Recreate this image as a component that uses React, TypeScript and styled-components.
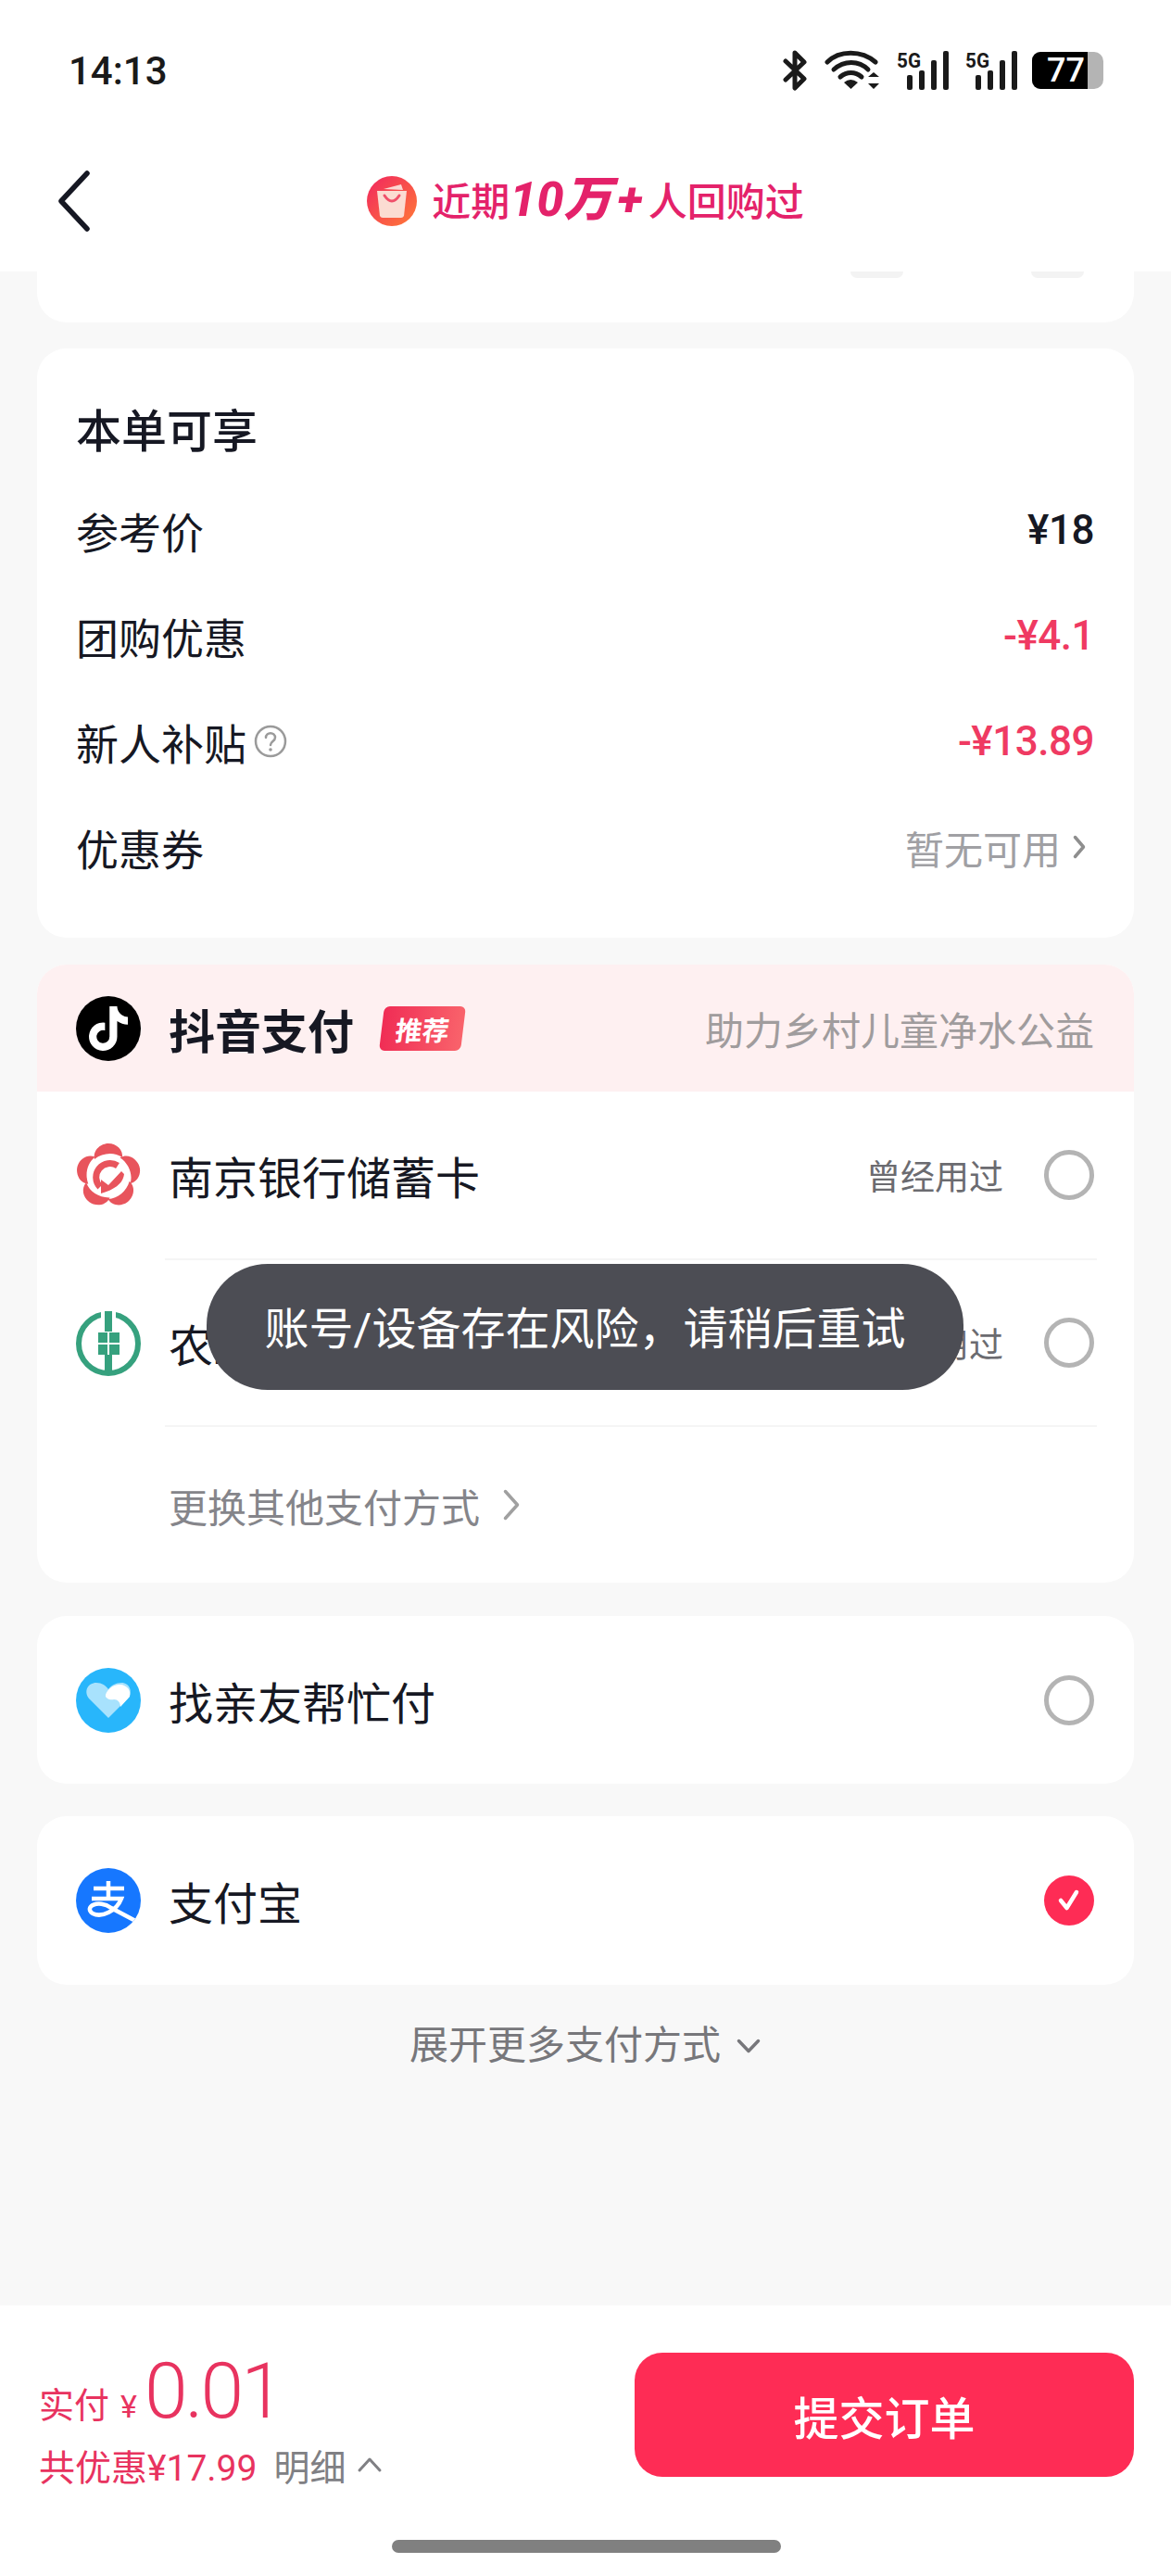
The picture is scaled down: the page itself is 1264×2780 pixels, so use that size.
import React from "react";
import styled, { createGlobalStyle } from "styled-components";
import { FaTiktok } from "react-icons/fa6";

const GlobalStyle = createGlobalStyle`
  html, body { margin: 0; padding: 0; background: #f8f8f8; }
  * { box-sizing: border-box; }
  body { font-family: Roboto, "Noto Sans CJK SC", sans-serif; color: #161823; }
`;

const Screen = styled.div`
  position: relative;
  width: 1264px;
  height: 2780px;
  display: flex;
  flex-direction: column;
  overflow: hidden;
  background: #f8f8f8;
`;

/* ---------- top ---------- */
const Header = styled.header`
  flex-shrink: 0;
  height: 293px;
  background: #fff;
`;

const StatusBar = styled.div`
  height: 152px;
  padding: 0 74px;
  display: flex;
  align-items: center;
  justify-content: space-between;
`;

const Time = styled.span`
  font-size: 42px;
  font-weight: 500;
  letter-spacing: 0;
  color: #1a1a1a;
`;

const StatusIcons = styled.div`
  display: flex;
  align-items: center;
  margin-right: -1px;
  gap: 18px;
`;

const Battery = styled.div`
  width: 77px;
  height: 40px;
  display: flex;
  margin-left: -2px;
  border-radius: 9px 10px 10px 9px;
  overflow: hidden;
  background: #b4b4b4;
`;

const BatteryFill = styled.span`
  width: 60px;
  background: #000;
  color: #fff;
  font-size: 36px;
  font-weight: 500;
  line-height: 40px;
  text-align: right;
  padding-right: 3px;
`;

const Nav = styled.div`
  height: 130px;
  padding: 0 62px;
  display: grid;
  grid-template-columns: 1fr auto 1fr;
  align-items: center;
`;

const BuyerTitle = styled.div`
  display: flex;
  align-items: center;
  gap: 16px;
  color: #e4226a;
  font-size: 42px;
  font-weight: 500;
  line-height: 60px;
`;

const BuyerStrong = styled.span`
  font-size: 52px;
  font-weight: 800;
  font-style: italic;
  margin-right: 6px;
`;

const BuyerText = styled.span`
  display: flex;
  align-items: baseline;
`;

/* ---------- content ---------- */
const Main = styled.main`
  flex: 1;
  padding: 0 40px;
  display: flex;
  flex-direction: column;
`;

const Card = styled.section<{ $gap: number }>`
  margin-bottom: ${(p) => p.$gap}px;
  background: #fff;
  border-radius: 32px;
  overflow: hidden;
`;

const PeekCard = styled.div`
  height: 55px;
  margin-bottom: 28px;
  padding-right: 54px;
  display: flex;
  justify-content: flex-end;
  gap: 138px;
  background: #fff;
  border-radius: 0 0 32px 32px;
`;

const PeekDot = styled.span`
  width: 57px;
  height: 7px;
  border-radius: 0 0 28px 28px;
  background: #f3f3f3;
`;

const DiscountCard = styled(Card)`
  height: 636px;
  padding: 43px 43px 0 42px;
`;

const CardTitle = styled.h2`
  margin: 0;
  height: 96px;
  font-size: 49px;
  font-weight: 500;
  line-height: 96px;
`;

const PriceRow = styled.div`
  height: 114px;
  display: flex;
  align-items: center;
  justify-content: space-between;
  font-size: 46px;
`;

const PriceLabel = styled.span`
  display: flex;
  align-items: center;
  gap: 8px;
`;

const PriceValue = styled.span<{ $red?: boolean }>`
  font-size: 44px;
  font-weight: 500;
  letter-spacing: -0.5px;
  color: ${(p) => (p.$red ? "#ef3a62" : "#161823")};
`;

const CouponHint = styled.span`
  display: flex;
  align-items: center;
  gap: 12px;
  margin-right: 8px;
  font-size: 42px;
  color: #a0a0a4;
`;

const PayCard = styled(Card)`
  display: flex;
  flex-direction: column;
`;

const PayHead = styled.div`
  height: 137px;
  padding: 0 43px 0 42px;
  display: flex;
  align-items: center;
  background: #fef0f1;
`;

const PayHeadName = styled.span`
  margin-left: 30px;
  font-size: 50px;
  font-weight: 700;
`;

const RecommendTag = styled.span`
  margin-left: 30px;
  width: 88px;
  height: 48px;
  display: flex;
  align-items: center;
  justify-content: center;
  transform: skewX(-7deg);
  border-radius: 6px;
  background: linear-gradient(90deg, #f02d55, #f9636b);
  color: #fff;
  font-size: 29px;
  font-weight: 700;
`;

const PayHeadNote = styled.span`
  margin-left: auto;
  font-size: 42px;
  color: #a09c9d;
`;

const PayRow = styled.div<{ $height: number }>`
  height: ${(p) => p.$height}px;
  padding-left: 42px;
  display: flex;
  align-items: center;
`;

const RowBody = styled.div<{ $divider?: boolean }>`
  flex: 1;
  height: 100%;
  margin: 0 40px 0 26px;
  padding: 0 3px 0 4px;
  display: flex;
  align-items: center;
  font-size: 48px;
  border-bottom: ${(p) => (p.$divider ? "2px solid #f5f5f5" : "none")};
`;

const UsedNote = styled.span`
  margin-left: auto;
  margin-right: 44px;
  font-size: 37px;
  color: #6b6b70;
`;

const Radio = styled.span<{ $checked?: boolean }>`
  width: 54px;
  height: 54px;
  flex-shrink: 0;
  display: flex;
  align-items: center;
  justify-content: center;
  border-radius: 50%;
  border: ${(p) => (p.$checked ? "none" : "5px solid #b4b4b4")};
  background: ${(p) => (p.$checked ? "#fe2c55" : "#fff")};
`;

const RadioEnd = styled(Radio)`
  margin-left: auto;
`;

const MoreLink = styled.div`
  height: 168px;
  padding-left: 142px;
  display: flex;
  align-items: center;
  gap: 24px;
  font-size: 42px;
  color: #85858a;
`;

const ExpandLink = styled.div`
  margin-top: 36px;
  display: flex;
  align-items: center;
  justify-content: center;
  gap: 16px;
  font-size: 42px;
  line-height: 60px;
  color: #77777b;
`;

/* ---------- bottom ---------- */
const Footer = styled.footer`
  flex-shrink: 0;
  height: 292px;
  padding: 51px 40px 0 42px;
  background: #fff;
`;

const FooterMain = styled.div`
  height: 134px;
  display: flex;
  justify-content: space-between;
`;

const Totals = styled.div`
  display: flex;
  flex-direction: column;
`;

const PayTotal = styled.div`
  height: 84px;
  display: flex;
  align-items: baseline;
  color: #e8335f;
  font-size: 38px;
  line-height: 84px;
`;

const Yen = styled.span`
  margin-left: 12px;
  margin-right: 8px;
  font-size: 34px;
`;

const Amount = styled.span`
  font-size: 84px;
  font-weight: 300;
  letter-spacing: -3px;
`;

const SavedLine = styled.div`
  height: 50px;
  margin-top: 12px;
  display: flex;
  align-items: center;
  color: #e8335f;
  font-size: 39px;
`;

const Detail = styled.span`
  margin-left: 18px;
  margin-right: 12px;
  color: #808084;
`;

const SubmitButton = styled.button`
  width: 539px;
  height: 134px;
  border: 0;
  border-radius: 30px;
  background: #fe2c55;
  color: #fff;
  font-family: inherit;
  font-size: 49px;
  font-weight: 500;
`;

const HomeBar = styled.div`
  width: 420px;
  height: 14px;
  margin: 68px auto 0;
  border-radius: 7px;
  background: #808080;
`;

const Toast = styled.div`
  position: absolute;
  top: 1364px;
  left: 223px;
  width: 817px;
  height: 136px;
  display: flex;
  align-items: center;
  justify-content: center;
  border-radius: 66px;
  background: #4c4d54;
  color: #fff;
  font-size: 48px;
  padding-bottom: 4px;
`;

/* ---------- drawings ---------- */
function Bluetooth() {
  return (
    <svg width="27" height="44" viewBox="0 0 27 44">
      <path d="M3 12 L23 31 L13 41 V3 L23 13 L3 32" fill="none" stroke="#1a1a1a" strokeWidth="5" strokeLinecap="round" strokeLinejoin="round" />
    </svg>
  );
}

function Wifi() {
  return (
    <svg width="60" height="44" viewBox="0 0 60 44">
      <g fill="none" stroke="#1a1a1a" strokeWidth="5" strokeLinecap="round">
        <path d="M3 13 C16 0 40 0 55 13" />
        <path d="M10 21 C21 11 37 11 47 21" />
        <path d="M17 29 C24 23 33 23 40 29" />
      </g>
      <path d="M21 35 Q28 29 36 35 L28.500 42 Z" fill="#1a1a1a" />
      <path d="M47 29 L53 24 L59 29 Z M47 36 H59 L53 42 Z" fill="#1a1a1a" />
    </svg>
  );
}

function Signal() {
  return (
    <svg width="56" height="44" viewBox="0 0 56 44">
      <text x="0" y="19" fontFamily="Roboto, sans-serif" fontSize="22" fontWeight="700" textLength="26" lengthAdjust="spacingAndGlyphs" fill="#1a1a1a">5G</text>
      <rect x="11" y="27" width="6" height="16" rx="2" fill="#1a1a1a" />
      <rect x="24" y="22" width="6" height="21" rx="2" fill="#1a1a1a" />
      <rect x="37" y="11" width="6" height="32" rx="2" fill="#1a1a1a" />
      <rect x="50" y="1" width="6" height="42" rx="2" fill="#1a1a1a" />
    </svg>
  );
}

function BackArrow() {
  return (
    <svg width="36" height="66" viewBox="0 0 36 66">
      <path d="M32 3 L4 33 L32 63" transform="scale(1 1)" fill="none" stroke="#161823" strokeWidth="5.500" strokeLinecap="round" strokeLinejoin="round" />
    </svg>
  );
}

function BagBadge() {
  return (
    <svg width="54" height="54" viewBox="0 0 54 54">
      <defs>
        <linearGradient id="bagBg" x1="0" y1="0" x2="1" y2="1">
          <stop offset="0" stopColor="#f1265f" />
          <stop offset="1" stopColor="#ff7a36" />
        </linearGradient>
      </defs>
      <circle cx="27" cy="27" r="27" fill="url(#bagBg)" />
      <path d="M18 14 L37 9 L39 15 Z" fill="#fbd9d3" />
      <path d="M11 16 H43 L40 43 Q39 45 37 45 H17 Q15 45 14 43 Z" fill="#fbdcd2" />
      <path d="M19 21 Q27 33 35 21" fill="none" stroke="#f0506a" strokeWidth="3" strokeLinecap="round" />
    </svg>
  );
}

function HelpIcon() {
  return (
    <svg width="36" height="36" viewBox="0 0 36 36">
      <circle cx="18" cy="18" r="16" fill="none" stroke="#9a9a9a" strokeWidth="2.500" />
      <path d="M13 14 C13 7.500 23 7.500 23 14 C23 18 18 18 18 22" fill="none" stroke="#9a9a9a" strokeWidth="2.500" strokeLinecap="round" />
      <circle cx="18" cy="27" r="1.800" fill="#9a9a9a" />
    </svg>
  );
}

function Chevron({ dir, color, w, h, sw }: { dir: "right" | "down" | "up"; color: string; w: number; h: number; sw: number }) {
  const p = sw;
  const d =
    dir === "right"
      ? `M${p} ${p} L${w - p} ${h / 2} L${p} ${h - p}`
      : dir === "down"
        ? `M${p} ${p} L${w / 2} ${h - p} L${w - p} ${p}`
        : `M${p} ${h - p} L${w / 2} ${p} L${w - p} ${h - p}`;
  return (
    <svg width={w} height={h} viewBox={`0 0 ${w} ${h}`}>
      <path d={d} fill="none" stroke={color} strokeWidth={sw} strokeLinecap="round" strokeLinejoin="round" />
    </svg>
  );
}

const TiktokBadge = styled.span`
  width: 70px;
  height: 70px;
  flex-shrink: 0;
  display: flex;
  align-items: center;
  justify-content: center;
  border-radius: 50%;
  background: #000;
  color: #fff;
`;

function NanjingLogo() {
  const petal = "M-15 -18 C-17 -29 -7 -35 0 -35 C9 -35 16 -28 15 -20 C6 -26 -6 -25 -15 -18 Z";
  return (
    <svg width="70" height="70" viewBox="-35 -35 70 70" style={{ flexShrink: 0 }}>
      {[0, 72, 144, 216, 288].map((a) => (
        <path key={a} d={petal} transform={`rotate(${a})`} fill="#e8545c" />
      ))}
      <path d="M-9 12 A15 15 0 0 1 10 -11" fill="none" stroke="#e8545c" strokeWidth="7" />
      <path d="M-8 4 L0 10 L14 -5 L17 -2 C16 7 9 14 -8 19 Z" fill="#e8545c" />
      <path d="M0 -9 L7 -1 L0 6 L-7 -1 Z" fill="#fff" />
    </svg>
  );
}

function AbcLogo() {
  return (
    <svg width="70" height="70" viewBox="-35 -35 70 70" style={{ flexShrink: 0 }}>
      <circle r="32" fill="none" stroke="#36a17e" strokeWidth="6" />
      <rect x="-8" y="-36" width="16" height="24" fill="#fff" />
      <rect x="-4" y="-35" width="8" height="22" fill="#36a17e" />
      <rect x="-11" y="-12" width="10" height="11" fill="#36a17e" />
      <rect x="1" y="-12" width="11" height="11" fill="#36a17e" />
      <rect x="-11" y="1" width="10" height="11" fill="#36a17e" />
      <rect x="1" y="1" width="11" height="11" fill="#36a17e" />
      <rect x="-4" y="12" width="8" height="22" fill="#36a17e" />
    </svg>
  );
}

function FriendLogo() {
  return (
    <svg width="70" height="70" viewBox="0 0 70 70" style={{ flexShrink: 0 }}>
      <circle cx="35" cy="35" r="35" fill="#28b6fb" />
      <path d="M35 54 L14 33 C8 25 13 16 22 16 C28 16 32 19 35 23 C38 19 43 16 49 16 C58 16 62 26 56 33 Z" fill="#a8e2fd" />
      <path d="M32 29 C34 23 39 19 46 18 C54 17 60 24 58 31 L48 42 C48 37 45 34 41 34 C37 35 31 33 32 29 Z" fill="#fff" />
    </svg>
  );
}

function AlipayLogo() {
  return (
    <svg width="70" height="70" viewBox="0 0 70 70" style={{ flexShrink: 0 }}>
      <defs>
        <clipPath id="aliClip">
          <circle cx="35" cy="35" r="35" />
        </clipPath>
      </defs>
      <circle cx="35" cy="35" r="35" fill="#1677ff" />
      <g clipPath="url(#aliClip)" fill="none" stroke="#fff" strokeWidth="4.500">
        <path d="M19 22 H52" />
        <path d="M35 14 V34" />
        <path d="M17 33 H49 C44 46 28 54 18 49 C8 42 24 33 38 43 L70 60" strokeWidth="4.500" />
      </g>
    </svg>
  );
}

const rows = [
  { label: "参考价", value: "¥18", red: false },
  { label: "团购优惠", value: "-¥4.1", red: true },
  { label: "新人补贴", value: "-¥13.89", red: true, help: true },
];

export default function App() {
  return (
    <>
      <GlobalStyle />
      <Screen>
        <Header>
          <StatusBar>
            <Time>14:13</Time>
            <StatusIcons>
              <Bluetooth />
              <Wifi />
              <Signal />
              <Signal />
              <Battery>
                <BatteryFill>77</BatteryFill>
              </Battery>
            </StatusIcons>
          </StatusBar>
          <Nav>
            <BackArrow />
            <BuyerTitle>
              <BagBadge />
              <BuyerText>
                近期<BuyerStrong>10万</BuyerStrong>
                <BuyerStrong as="span">+</BuyerStrong>人回购过
              </BuyerText>
            </BuyerTitle>
          </Nav>
        </Header>

        <Main>
          <PeekCard>
            <PeekDot />
            <PeekDot />
          </PeekCard>

          <DiscountCard $gap={29}>
            <CardTitle>本单可享</CardTitle>
            {rows.map((r) => (
              <PriceRow key={r.label}>
                <PriceLabel>
                  {r.label}
                  {r.help && <HelpIcon />}
                </PriceLabel>
                <PriceValue $red={r.red}>{r.value}</PriceValue>
              </PriceRow>
            ))}
            <PriceRow>
              <PriceLabel>优惠券</PriceLabel>
              <CouponHint>
                暂无可用
                <Chevron dir="right" color="#8e8e8e" w={16} h={28} sw={3.5} />
              </CouponHint>
            </PriceRow>
          </DiscountCard>

          <PayCard $gap={36}>
            <PayHead>
              <TiktokBadge>
                <FaTiktok size={48} />
              </TiktokBadge>
              <PayHeadName>抖音支付</PayHeadName>
              <RecommendTag>推荐</RecommendTag>
              <PayHeadNote>助力乡村儿童净水公益</PayHeadNote>
            </PayHead>
            <PayRow $height={182}>
              <NanjingLogo />
              <RowBody $divider>
                南京银行储蓄卡
                <UsedNote>曾经用过</UsedNote>
                <Radio />
              </RowBody>
            </PayRow>
            <PayRow $height={180}>
              <AbcLogo />
              <RowBody $divider>
                农业银行储蓄卡
                <UsedNote>曾经用过</UsedNote>
                <Radio />
              </RowBody>
            </PayRow>
            <MoreLink>
              更换其他支付方式
              <Chevron dir="right" color="#a0a0a0" w={20} h={36} sw={3.5} />
            </MoreLink>
          </PayCard>

          <Card $gap={35}>
            <PayRow $height={181}>
              <FriendLogo />
              <RowBody>
                找亲友帮忙付
                <RadioEnd />
              </RowBody>
            </PayRow>
          </Card>

          <Card $gap={0}>
            <PayRow $height={182}>
              <AlipayLogo />
              <RowBody>
                支付宝
                <RadioEnd $checked>
                  <svg width="28" height="28" viewBox="0 0 28 28">
                    <path d="M5 14 L11.500 22 L22 5" fill="none" stroke="#fff" strokeWidth="4.500" strokeLinecap="round" strokeLinejoin="round" />
                  </svg>
                </RadioEnd>
              </RowBody>
            </PayRow>
          </Card>

          <ExpandLink>
            展开更多支付方式
            <Chevron dir="down" color="#77777b" w={28} h={18} sw={3.5} />
          </ExpandLink>
        </Main>

        <Footer>
          <FooterMain>
            <Totals>
              <PayTotal>
                实付<Yen>¥</Yen>
                <Amount>0.01</Amount>
              </PayTotal>
              <SavedLine>
                共优惠¥17.99
                <Detail>明细</Detail>
                <Chevron dir="up" color="#808084" w={28} h={18} sw={3} />
              </SavedLine>
            </Totals>
            <SubmitButton>提交订单</SubmitButton>
          </FooterMain>
          <HomeBar />
        </Footer>

        <Toast>账号/设备存在风险，请稍后重试</Toast>
      </Screen>
    </>
  );
}
